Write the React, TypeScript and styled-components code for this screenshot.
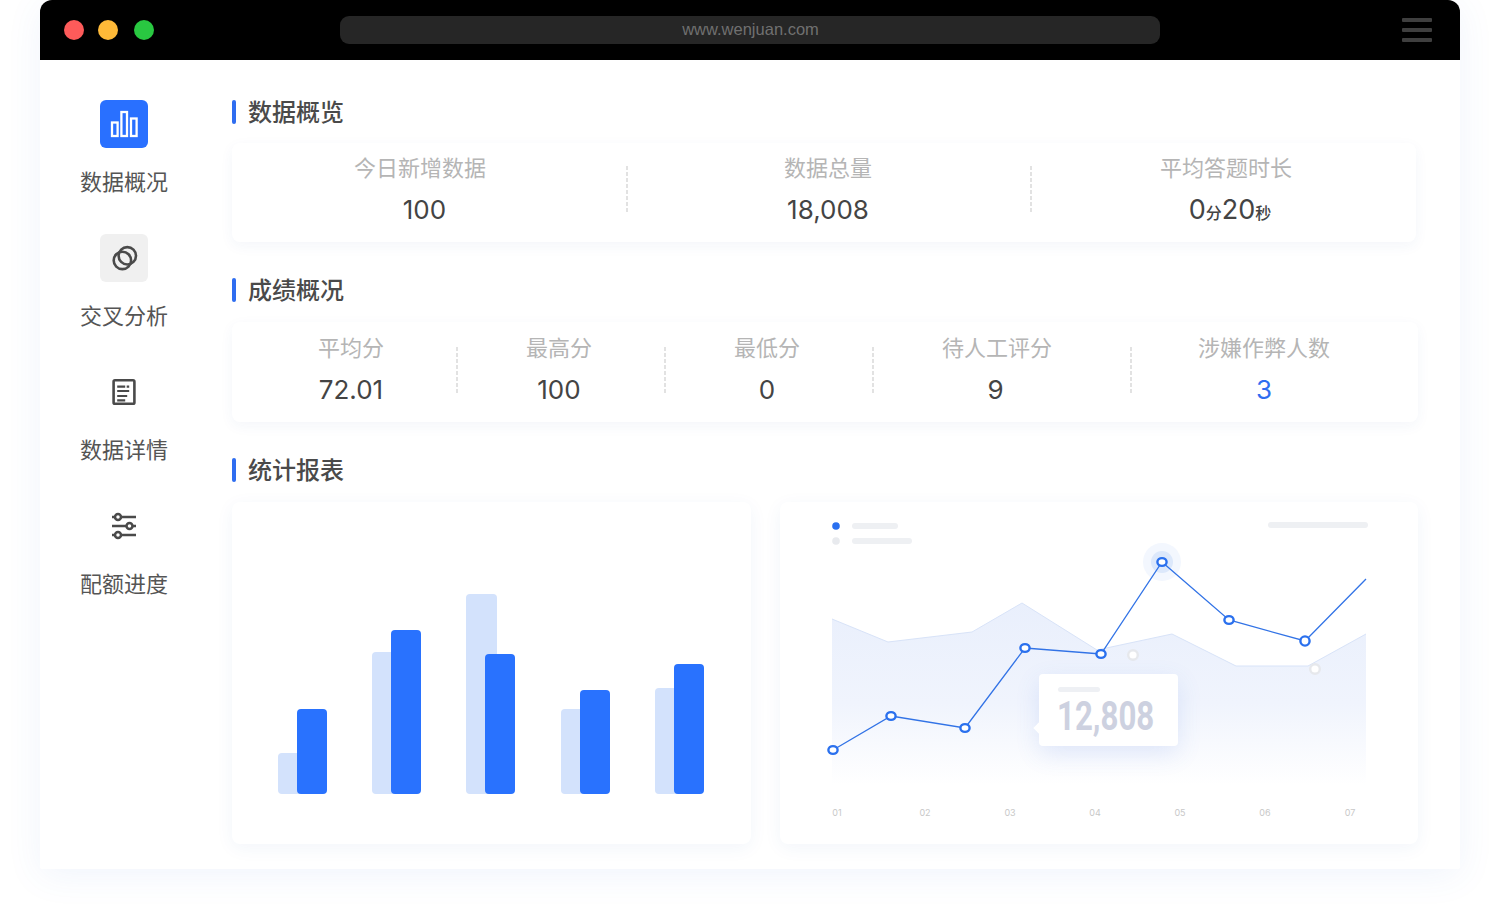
import React from "react";
import styled, { createGlobalStyle } from "styled-components";

const Global = createGlobalStyle`
  html, body { margin: 0; padding: 0; background: #fff; height: 910px; overflow: hidden; }
  body { font-family: Inter, "Noto Sans CJK SC", sans-serif; }
`;

const Page = styled.div`
  width: 1498px;
  height: 910px;
  padding: 0 38px 0 40px;
  box-sizing: border-box;
  overflow: hidden;
`;
const Window = styled.div`
  width: 1420px;
  height: 869px;
  border-radius: 12px 12px 2px 2px;
  background: #fff;
  box-shadow: 0 6px 36px rgba(60, 110, 220, 0.08);
  display: flex;
  flex-direction: column;
`;
const Chrome = styled.header`
  height: 60px;
  flex: none;
  background: #000;
  border-radius: 12px 12px 0 0;
  display: flex;
  align-items: center;
  padding: 0 28px 0 24px;
`;
const Lights = styled.div`
  display: flex;
  gap: 14px;
  width: 276px;
`;
const Light = styled.span<{ $c: string; $gap?: number }>`
  width: 20px;
  height: 20px;
  border-radius: 50%;
  background: ${(p) => p.$c};
  margin-left: ${(p) => p.$gap ?? 0}px;
`;
const Address = styled.div`
  width: 820px;
  height: 28px;
  border-radius: 9px;
  background: #262626;
  color: #707070;
  font-family: "Liberation Sans", sans-serif;
  font-size: 16.5px;
  line-height: 26px;
  text-align: center;
  padding-left: 1px;
  box-sizing: border-box;
`;
const Burger = styled.div`
  margin-left: auto;
  width: 30px;
  height: 24px;
  display: flex;
  flex-direction: column;
  justify-content: space-between;
`;
const BurgerLine = styled.i`
  display: block;
  height: 4px;
  border-radius: 1px;
  background: #3f3f3f;
`;
const Body = styled.main`
  flex: 1;
  display: flex;
  padding-top: 40px;
`;
const Side = styled.nav`
  width: 168px;
  margin-right: 24px;
  flex: none;
  display: flex;
  flex-direction: column;
  gap: 39px;
`;
const NavItem = styled.div`
  display: flex;
  flex-direction: column;
  align-items: center;
  gap: 17px;
`;
const IconBox = styled.div<{ $bg?: string }>`
  width: 48px;
  height: 48px;
  border-radius: 6px;
  background: ${(p) => p.$bg ?? "transparent"};
  svg { display: block; }
`;
const NavLabel = styled.div`
  font-family: "Noto Sans CJK SC", sans-serif;
  font-size: 22px;
  line-height: 30px;
  color: #555;
`;
const Content = styled.div`
  width: 1186px;
  display: flex;
  flex-direction: column;
`;
const Heading = styled.h2<{ $mb: number }>`
  margin: 0 0 ${(p) => p.$mb}px;
  height: 24px;
  display: flex;
  align-items: flex-start;
  gap: 12px;
  font-family: "Noto Sans CJK SC", sans-serif;
  font-size: 24px;
  font-weight: 500;
  line-height: 22px;
  color: #4a4a4a;
  &::before {
    content: "";
    width: 4px;
    height: 24px;
    border-radius: 2px;
    background: #2f6df0;
  }
`;
const StatCard = styled.section<{ $w: number; $h: number }>`
  width: ${(p) => p.$w}px;
  height: ${(p) => p.$h}px;
  margin-bottom: 36px;
  padding-bottom: 8px;
  box-sizing: border-box;
  border-radius: 8px;
  background: #fff;
  box-shadow: 0 4px 14px rgba(40, 70, 150, 0.05);
  display: flex;
  align-items: center;
`;
const Cell = styled.div<{ $w: number; $pl?: number; $pr?: number }>`
  width: ${(p) => p.$w}px;
  flex: none;
  box-sizing: border-box;
  padding: 0 ${(p) => p.$pr ?? 0}px 0 ${(p) => p.$pl ?? 0}px;
  text-align: center;
`;
const StatLabel = styled.div`
  font-family: "Noto Sans CJK SC", sans-serif;
  font-size: 22px;
  line-height: 30px;
  color: #b5b5b5;
  margin-bottom: 13px;
`;
const StatValue = styled.div<{ $pl?: number; $pr?: number; $blue?: boolean; $size?: number }>`
  font-family: Inter, "Noto Sans CJK SC", sans-serif;
  font-size: ${(p) => p.$size ?? 26}px;
  line-height: 32px;
  height: 32px;
  color: ${(p) => (p.$blue ? "#2f6df0" : "#444")};
  padding: 0 ${(p) => p.$pr ?? 0}px 0 ${(p) => p.$pl ?? 0}px;
`;
const Unit = styled.span`
  font-family: "Noto Sans CJK SC", sans-serif;
  font-size: 16px;
  line-height: 16px;
  font-weight: 500;
`;
const Sep = styled.div<{ $mt: number }>`
  width: 2px;
  height: 46px;
  flex: none;
  margin-top: ${(p) => p.$mt}px;
  background: repeating-linear-gradient(to bottom, #e2e2e2 0 4px, transparent 4px 6px);
`;
const ChartRow = styled.div`
  display: flex;
  gap: 29px;
`;
const ChartCard = styled.section<{ $w: number }>`
  position: relative;
  width: ${(p) => p.$w}px;
  height: 342px;
  border-radius: 8px;
  background: #fff;
  box-shadow: 0 4px 18px rgba(40, 80, 170, 0.06);
  svg { display: block; }
`;
const Tooltip = styled.div`
  position: absolute;
  left: 259px;
  top: 172px;
  width: 139px;
  height: 72px;
  border-radius: 4px;
  background: #fff;
  box-shadow: 0 8px 24px rgba(70, 110, 220, 0.14);
  box-sizing: border-box;
  padding: 13px 0 0 18px;
  &::before {
    content: "";
    position: absolute;
    left: -4px;
    top: 50px;
    width: 8px;
    height: 8px;
    background: #fff;
    transform: rotate(45deg);
  }
`;
const TipBar = styled.div`
  width: 42px;
  height: 5px;
  border-radius: 3px;
  background: #eef0f4;
  margin: 0 0 3px 1px;
`;
const TipValue = styled.div`
  font-family: Roboto, sans-serif;
  font-weight: 700;
  font-size: 40px;
  line-height: 44px;
  color: #cdd1e0;
  white-space: nowrap;
  transform: scaleX(0.78);
  transform-origin: left center;
`;

const BarsIcon = () => (
  <svg width="48" height="48" viewBox="0 0 48 48" fill="none" stroke="#fff" strokeWidth="2.3">
    <rect x="12" y="22.5" width="5.6" height="13.5" />
    <rect x="21.4" y="12" width="5.6" height="24" />
    <rect x="31" y="18.5" width="5.6" height="17.5" />
  </svg>
);
const RingsIcon = () => (
  <svg width="48" height="48" viewBox="0 0 48 48" fill="none" stroke="#4a4a4a" strokeWidth="2.6">
    <circle cx="22.4" cy="26.4" r="8.7" />
    <circle cx="27.3" cy="21.8" r="8.7" />
  </svg>
);
const DocIcon = () => (
  <svg width="48" height="48" viewBox="0 0 48 48" fill="none" stroke="#4a4a4a">
    <rect x="13.6" y="12.3" width="20.8" height="23.5" rx="1.4" strokeWidth="2.6" />
    <path d="M17.2 18.7h8M26.7 18.7h2.5M17.2 23h12M17.2 28h10M17.2 32.3h8" strokeWidth="2.2" />
  </svg>
);
const SlidersIcon = () => (
  <svg width="48" height="48" viewBox="0 0 48 48" fill="none" stroke="#4a4a4a" strokeWidth="2.5">
    <path d="M12 15h24M12 24h24M12 33h24" />
    <circle cx="18" cy="15" r="3" fill="#fff" />
    <circle cx="29.5" cy="24" r="3" fill="#fff" />
    <circle cx="18" cy="33" r="3" fill="#fff" />
  </svg>
);

const bars = [
  { lx: 278, lt: 753, bx: 297, bt: 709 },
  { lx: 372, lt: 652, bx: 391, bt: 630 },
  { lx: 466, lt: 594, bx: 485, bt: 654 },
  { lx: 561, lt: 709, bx: 580, bt: 690 },
  { lx: 655, lt: 688, bx: 674, bt: 664 },
];

const BarChart = () => (
  <svg width="519" height="342" viewBox="232 502 519 342">
    {bars.map((b) => (
      <g key={b.lx}>
        <rect x={b.lx} y={b.lt} width="31" height={794 - b.lt} rx="4" fill="#d3e2fc" />
        <rect x={b.bx} y={b.bt} width="30" height={794 - b.bt} rx="4" fill="#2972fe" />
      </g>
    ))}
  </svg>
);

const pts: [number, number][] = [
  [833, 750], [891, 716], [965, 728], [1025, 648], [1101, 654], [1162, 562], [1229, 620], [1305, 641],
];
const areaTop = "832,619 888,642 972,632 1022,603 1097,650 1172,634 1236,666 1308,666 1366,634";
const axis = [[837, "01"], [925, "02"], [1010, "03"], [1095, "04"], [1180, "05"], [1265, "06"], [1350, "07"]] as const;

const LineChart = () => (
  <svg width="638" height="342" viewBox="780 502 638 342">
    <defs>
      <linearGradient id="area" x1="0" y1="603" x2="0" y2="785" gradientUnits="userSpaceOnUse">
        <stop offset="0" stopColor="#e9effc" />
        <stop offset="0.55" stopColor="#f0f4fd" />
        <stop offset="1" stopColor="#ffffff" />
      </linearGradient>
    </defs>
    <circle cx="836" cy="526" r="3.8" fill="#2a70f0" />
    <circle cx="836" cy="541" r="3.8" fill="#e8eaee" />
    <rect x="852" y="523" width="46" height="6" rx="3" fill="#eef0f3" />
    <rect x="852" y="538" width="60" height="6" rx="3" fill="#eef0f3" />
    <rect x="1268" y="522" width="100" height="6" rx="3" fill="#eef0f3" />
    <polygon points={`${areaTop} 1366,785 832,785`} fill="url(#area)" />
    <polyline points={areaTop} fill="none" stroke="#d8e3f8" strokeWidth="1" />
    <circle cx="1133" cy="655" r="4.8" fill="#fff" stroke="#e6e8ec" strokeWidth="2.4" />
    <circle cx="1315" cy="669" r="4.8" fill="#fff" stroke="#e6e8ec" strokeWidth="2.4" />
    <circle cx="1162" cy="562" r="19" fill="#f3f7fe" />
    <circle cx="1162" cy="562" r="11" fill="#dce8fb" />
    <polyline
      points={`${pts.map((p) => p.join(",")).join(" ")} 1366,579`}
      fill="none"
      stroke="#3273e6"
      strokeWidth="1.3"
    />
    {pts.map(([x, y], i) => (
      <ellipse
        key={x}
        cx={x}
        cy={y}
        rx="4.6"
        ry={i === 7 ? 4.6 : 3.9}
        fill="#fff"
        stroke="#2a70ee"
        strokeWidth="2.4"
      />
    ))}
    {axis.map(([x, t]) => (
      <text key={t} x={x} y="816" textAnchor="middle" fontFamily="Inter, sans-serif" fontSize="9" fill="#c8c8c8">
        {t}
      </text>
    ))}
  </svg>
);

export default function App() {
  return (
    <Page>
      <Global />
      <Window>
        <Chrome>
          <Lights>
            <Light $c="#fd5b5a" />
            <Light $c="#feb938" />
            <Light $c="#29c841" $gap={2} />
          </Lights>
          <Address>www.wenjuan.com</Address>
          <Burger>
            <BurgerLine />
            <BurgerLine />
            <BurgerLine />
          </Burger>
        </Chrome>
        <Body>
          <Side>
            <NavItem>
              <IconBox $bg="#2970ff"><BarsIcon /></IconBox>
              <NavLabel>数据概况</NavLabel>
            </NavItem>
            <NavItem>
              <IconBox $bg="#f0f0f0"><RingsIcon /></IconBox>
              <NavLabel>交叉分析</NavLabel>
            </NavItem>
            <NavItem>
              <IconBox><DocIcon /></IconBox>
              <NavLabel>数据详情</NavLabel>
            </NavItem>
            <NavItem>
              <IconBox><SlidersIcon /></IconBox>
              <NavLabel>配额进度</NavLabel>
            </NavItem>
          </Side>
          <Content>
            <Heading $mb={19}>数据概览</Heading>
            <StatCard $w={1184} $h={99}>
              <Cell $w={394} $pr={18}>
                <StatLabel>今日新增数据</StatLabel>
                <StatValue $pl={9}>100</StatValue>
              </Cell>
              <Sep $mt={0} />
              <Cell $w={402} $pr={2}>
                <StatLabel>数据总量</StatLabel>
                <StatValue>18,008</StatValue>
              </Cell>
              <Sep $mt={0} />
              <Cell $w={384} $pl={4}>
                <StatLabel>平均答题时长</StatLabel>
                <StatValue $pl={8} $size={27}>0<Unit>分</Unit>20<Unit>秒</Unit></StatValue>
              </Cell>
            </StatCard>
            <Heading $mb={20}>成绩概况</Heading>
            <StatCard $w={1186} $h={100}>
              <Cell $w={224} $pl={14}>
                <StatLabel>平均分</StatLabel>
                <StatValue>72.01</StatValue>
              </Cell>
              <Sep $mt={4} />
              <Cell $w={206} $pr={4}>
                <StatLabel>最高分</StatLabel>
                <StatValue>100</StatValue>
              </Cell>
              <Sep $mt={4} />
              <Cell $w={206} $pr={4}>
                <StatLabel>最低分</StatLabel>
                <StatValue>0</StatValue>
              </Cell>
              <Sep $mt={4} />
              <Cell $w={256} $pr={10}>
                <StatLabel>待人工评分</StatLabel>
                <StatValue $pr={3}>9</StatValue>
              </Cell>
              <Sep $mt={4} />
              <Cell $w={286} $pr={22}>
                <StatLabel>涉嫌作弊人数</StatLabel>
                <StatValue $blue>3</StatValue>
              </Cell>
            </StatCard>
            <Heading $mb={20}>统计报表</Heading>
            <ChartRow>
              <ChartCard $w={519}><BarChart /></ChartCard>
              <ChartCard $w={638}>
                <LineChart />
                <Tooltip>
                  <TipBar />
                  <TipValue>12,808</TipValue>
                </Tooltip>
              </ChartCard>
            </ChartRow>
          </Content>
        </Body>
      </Window>
    </Page>
  );
}
